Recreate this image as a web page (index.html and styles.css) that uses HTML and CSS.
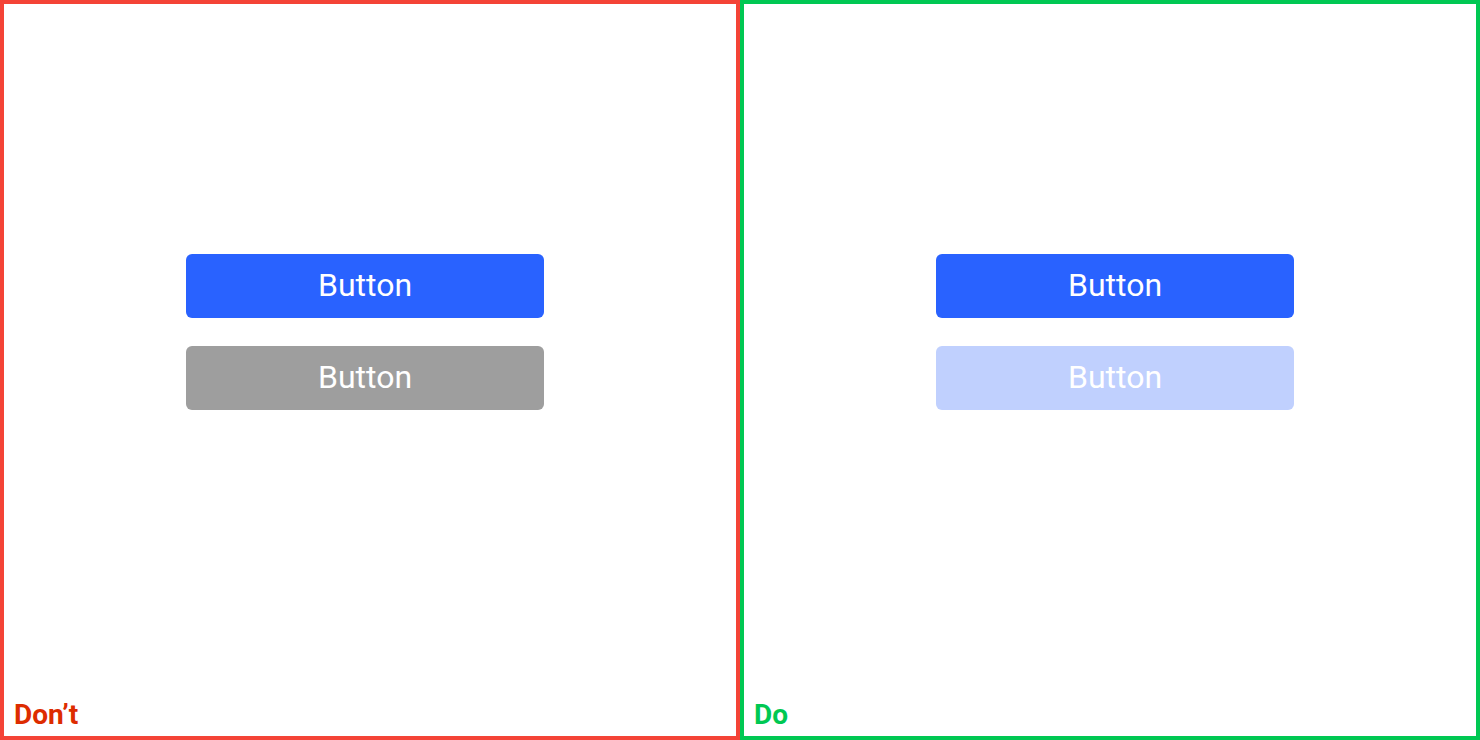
FILE: index.html
```html
<!DOCTYPE html>
<html lang="en">
<head>
    <meta charset="UTF-8">
    <meta name="viewport" content="width=device-width, initial-scale=1.0">
    <title>Disabled Button</title>
    <link rel="stylesheet" href="styles.css">
</head>
<body>
    <div class="compare">
        <div class="panel dont">
            <div class="buttons">
                <button class="btn primary">Button</button>
                <button class="btn gray">Button</button>
            </div>
            <div class="label">Don’t</div>
        </div>
        <div class="panel do">
            <div class="buttons">
                <button class="btn primary">Button</button>
                <button class="btn soft">Button</button>
            </div>
            <div class="label">Do</div>
        </div>
    </div>
</body>
</html>
```

FILE: styles.css
```css
body {
    margin: 0;
    font-family: Roboto, "Liberation Sans", sans-serif;
    background: white;
}
.compare {
    display: flex;
    width: 1480px;
    height: 740px;
}
.panel {
    box-sizing: border-box;
    width: 740px;
    height: 740px;
    border: 4px solid;
    display: flex;
    flex-direction: column;
    padding: 250px 0 6px 0;
}
.dont {
    border-color: #f44336;
}
.do {
    border-color: #00c853;
}
.buttons {
    display: flex;
    flex-direction: column;
    gap: 28px;
    padding-left: 182px;
}
.do .buttons {
    padding-left: 192px;
}
.btn {
    width: 358px;
    height: 64px;
    border: none;
    border-radius: 6px;
    color: white;
    font-family: Roboto, "Liberation Sans", sans-serif;
    font-size: 32px;
    padding: 0 0 2px 0;
}
.primary {
    background: #2962ff;
}
.gray {
    background: #9e9e9e;
}
.soft {
    background: #c0d0fe;
}
.label {
    margin-top: auto;
    padding-left: 10px;
    font-size: 28px;
    font-weight: bold;
    line-height: 30px;
}
.dont .label {
    color: #dd2c00;
}
.do .label {
    color: #00c853;
}
```
